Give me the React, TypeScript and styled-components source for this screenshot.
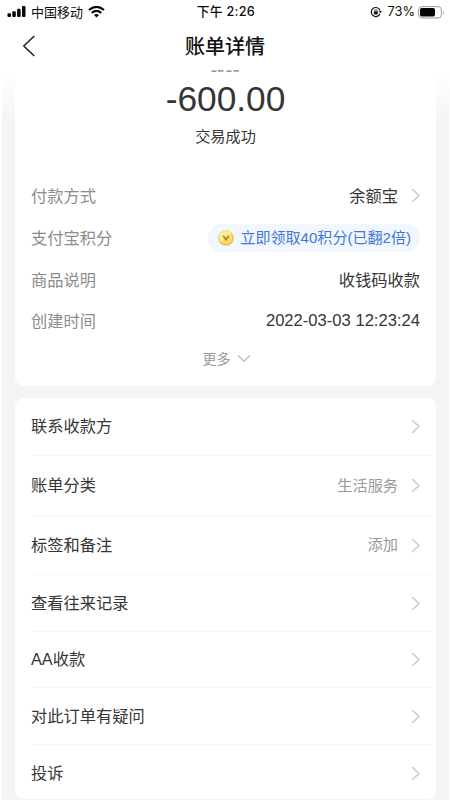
import React from 'react';
import styled, { createGlobalStyle } from 'styled-components';

const Global = createGlobalStyle`
  * { box-sizing: border-box; }
  body { margin: 0; background: #fff; overflow: hidden; font-family: "Liberation Sans", "Noto Sans CJK SC", sans-serif; }
`;

const Screen = styled.main`
  width: 450px;
  height: 800px;
  overflow: hidden;
  display: flex;
  flex-direction: column;
  color: #363636;
`;

const StatusBar = styled.header`
  height: 24px;
  flex: none;
  padding: 0 5px 0 7px;
  display: grid;
  grid-template-columns: 1fr auto 1fr;
  align-items: center;
  font-family: Inter, "Noto Sans CJK SC", sans-serif;
  color: #0c0c0c;
  line-height: 24px;
`;

const StatusGroup = styled.div<{ $end?: boolean }>`
  display: flex;
  align-items: center;
  justify-content: ${(p) => (p.$end ? 'flex-end' : 'flex-start')};
`;

const Carrier = styled.span`
  font-size: 13px;
  margin: 0 5px 0 5px;
`;

const Clock = styled.span`
  font-size: 12.7px;
  font-weight: 500;
  letter-spacing: 0.3px;
`;

const Percent = styled.span`
  font-size: 12.8px;
  margin: 0 3px 0 6px;
`;

const NavBar = styled.nav`
  height: 46px;
  flex: none;
  display: grid;
  grid-template-columns: 60px 1fr 60px;
  align-items: center;
  padding-bottom: 1px;
`;

const BackButton = styled.button`
  border: 0;
  padding: 0 0 2px 22px;
  background: none;
  display: flex;
`;

const Title = styled.h1`
  margin: 0;
  text-align: center;
  font-size: 20px;
  line-height: 30px;
  font-weight: 500;
  color: #101010;
`;

const Content = styled.div`
  flex: 1;
  min-height: 0;
  margin: 0 1px 0 2px;
  padding: 0 13px;
  background: linear-gradient(#fff 0, #fcfcfc 15px, #f4f4f4 55px);
  overflow: hidden;
`;

const Card = styled.section<{ $summary?: boolean }>`
  width: 421px;
  background: #fff;
  border-radius: ${(p) => (p.$summary ? '0 0 9px 9px' : '9px')};
  height: ${(p) => (p.$summary ? '316px' : '401px')};
  margin-bottom: 12px;
  padding: 0 16px;
  display: flex;
  flex-direction: column;
  overflow: hidden;
`;

const ClippedName = styled.div`
  height: 2px;
  flex: none;
  display: flex;
  justify-content: center;
`;

const Amount = styled.div`
  height: 53px;
  padding-top: 4px;
  text-align: center;
  font-size: 35.3px;
  line-height: 46px;
`;

const Result = styled.div`
  height: 24px;
  text-align: center;
  font-size: 15.2px;
  line-height: 24px;
`;

const Details = styled.dl`
  margin: 25px 0 0;
`;

const Detail = styled.div<{ $height: number }>`
  height: ${(p) => p.$height}px;
  display: flex;
  align-items: center;
  justify-content: space-between;
  font-size: 16.25px;
  line-height: 24px;
`;

const Label = styled.dt`
  color: #8c8c8c;
`;

const Value = styled.dd`
  margin: 0;
  display: flex;
  align-items: center;
`;

const DateTime = styled.time`
  font-size: 16.6px;
  padding-top: 1px;
`;

const Reward = styled.span`
  height: 28px;
  padding: 0 9px 0 10px;
  border-radius: 14px;
  display: flex;
  align-items: center;
  gap: 6px;
  background: #f2f7ff;
  color: #4377d5;
  font-size: 15.05px;
  white-space: nowrap;
`;

const More = styled.button`
  height: 36px;
  border: 0;
  padding: 0 0 0 2px;
  background: none;
  display: flex;
  align-items: center;
  justify-content: center;
  gap: 6px;
  font: inherit;
  font-size: 14px;
  color: #999;
`;

const Row = styled.div<{ $height: number; $last?: boolean }>`
  height: ${(p) => p.$height}px;
  flex: none;
  margin-right: -13px;
  padding-right: 13px;
  border-bottom: ${(p) => (p.$last ? 'none' : '1px solid #f8f8f8')};
  display: flex;
  align-items: center;
  justify-content: space-between;
  font-size: 16.25px;
  line-height: 24px;
`;

const RowLabel = styled.span`
  padding-bottom: 1px;
`;

const Hint = styled.span`
  display: flex;
  align-items: center;
  font-size: 15.2px;
  color: #999;
`;

const ArrowIcon = styled.svg`
  width: 9px;
  height: 15px;
  margin-left: 13px;
  flex: none;
`;

const Chevron = () => (
  <ArrowIcon viewBox="0 0 9 15" fill="none" stroke="#cacaca" strokeWidth="1.5">
    <path d="M1.2 1 7.8 7.5 1.2 14" />
  </ArrowIcon>
);

const Signal = () => (
  <svg width="19" height="12" viewBox="0 0 19 12" fill="#080808">
    <rect x="0.5" y="7.2" width="3.5" height="3.8" rx="1" />
    <rect x="5.3" y="5.2" width="3.5" height="5.8" rx="1" />
    <rect x="10.1" y="2.8" width="3.5" height="8.2" rx="1" />
    <rect x="15" y="0" width="3.5" height="11" rx="1" />
  </svg>
);

const Wifi = () => (
  <svg width="17" height="12" viewBox="0 0 17 12" fill="none" stroke="#080808" strokeWidth="2.1">
    <path d="M1 4Q8.5-2.2 16 4" />
    <path d="M3.7 6.9Q8.5 2.9 13.3 6.9" />
    <path d="M6 8.9Q8.5 7 11 8.9L8.5 11.5Z" fill="#080808" stroke="none" />
  </svg>
);

const RotationLock = () => (
  <svg width="12" height="12" viewBox="0 0 12 12" fill="none" stroke="#151515">
    <path d="M10 7.7A4.5 4.5 0 1 1 10.1 4.6" strokeWidth="1.2" />
    <path d="M8.7 5.1h3.2l-1.5 2.2Z" fill="#151515" stroke="none" />
    <rect x="3.9" y="5.4" width="3.9" height="3" fill="#151515" stroke="none" />
    <path d="M4.7 5.6V4.8a1.15 1.15 0 0 1 2.3 0v.8" strokeWidth=".8" />
  </svg>
);

const Battery = () => (
  <svg width="27" height="13" viewBox="0 0 27 13">
    <rect x="0.6" y="0.6" width="22.8" height="11.4" rx="3.2" fill="none" stroke="#999" />
    <rect x="2" y="2.1" width="15" height="8.4" rx="1.7" fill="#050505" />
    <path d="M25 4.4q1.5 2 0 4Z" fill="#999" />
  </svg>
);

const Coin = () => (
  <svg width="16" height="16" viewBox="0 0 16 16">
    <circle cx="8" cy="8" r="7.8" fill="#e9c04b" />
    <circle cx="7.6" cy="7.1" r="6.9" fill="#f8dc66" />
    <path d="M1 6.5A7 7 0 0 1 13 2.8L3.2 12A7 7 0 0 1 1 6.5" fill="#fbec91" />
    <path d="m5.3 5.8 2.7 3.8 2.7-3.8" fill="none" stroke="#a67c32" strokeWidth="1.6" />
  </svg>
);

const rows: { label: string; hint?: string; height: number }[] = [
  { label: '联系收款方', height: 58 },
  { label: '账单分类', hint: '生活服务', height: 60 },
  { label: '标签和备注', hint: '添加', height: 59 },
  { label: '查看往来记录', height: 57 },
  { label: 'AA收款', height: 56 },
  { label: '对此订单有疑问', height: 57 },
  { label: '投诉', height: 56 },
];

export default function App() {
  return (
    <Screen>
      <Global />
      <StatusBar>
        <StatusGroup><Signal /><Carrier>中国移动</Carrier><Wifi /></StatusGroup>
        <Clock>下午 2:26</Clock>
        <StatusGroup $end><RotationLock /><Percent>73%</Percent><Battery /></StatusGroup>
      </StatusBar>
      <NavBar>
        <BackButton aria-label="返回">
          <svg width="14" height="22" viewBox="0 0 14 22" fill="none" stroke="#202020" strokeWidth="1.5">
            <path d="M12.3 1 1.8 11l10.5 10" />
          </svg>
        </BackButton>
        <Title>账单详情</Title>
      </NavBar>
      <Content>
        <Card $summary>
          <ClippedName>
            <svg width="29" height="2" viewBox="0 0 29 2" stroke="#777" strokeWidth="1.2">
              <path d="M.5 1.2h5M7 .9h5.5M15.5 1.2h5M22.5.9h5.5" />
            </svg>
          </ClippedName>
          <Amount>-600.00</Amount>
          <Result>交易成功</Result>
          <Details>
            <Detail $height={43}><Label>付款方式</Label><Value>余额宝<Chevron /></Value></Detail>
            <Detail $height={42}><Label>支付宝积分</Label><Value><Reward><Coin />立即领取40积分(已翻2倍)</Reward></Value></Detail>
            <Detail $height={42}><Label>商品说明</Label><Value>收钱码收款</Value></Detail>
            <Detail $height={39}><Label>创建时间</Label><Value><DateTime>2022-03-03 12:23:24</DateTime></Value></Detail>
          </Details>
          <More>
            更多
            <svg width="14" height="9" viewBox="0 0 14 9" fill="none" stroke="#c0c0c0" strokeWidth="1.5"><path d="m1 1.2 6 6 6-6" /></svg>
          </More>
        </Card>
        <Card>
          {rows.map((row, i) => (
            <Row key={row.label} $height={row.height} $last={i === rows.length - 1}>
              <RowLabel>{row.label}</RowLabel>
              <Hint>{row.hint}<Chevron /></Hint>
            </Row>
          ))}
        </Card>
      </Content>
    </Screen>
  );
}
